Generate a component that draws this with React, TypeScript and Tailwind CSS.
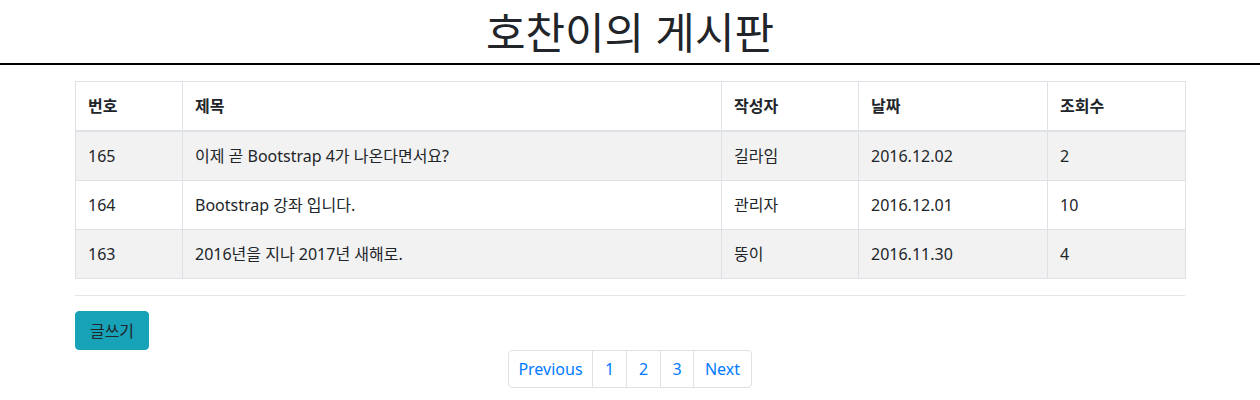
import React from "react";

const rows = [
  { no: 165, title: "이제 곧 Bootstrap 4가 나온다면서요?", author: "길라임", date: "2016.12.02", views: 2 },
  { no: 164, title: "Bootstrap 강좌 입니다.", author: "관리자", date: "2016.12.01", views: 10 },
  { no: 163, title: "2016년을 지나 2017년 새해로.", author: "뚱이", date: "2016.11.30", views: 4 },
];

const pages = [
  { label: "Previous", w: "w-[85px]" },
  { label: "1", w: "w-[35px]" },
  { label: "2", w: "w-[35px]" },
  { label: "3", w: "w-[34px]" },
  { label: "Next", w: "w-[59px]" },
];

export default function App() {
  return (
    <div
      className="w-[1260px] h-[400px] bg-white text-[#212529] text-[16px] leading-[24px]"
      style={{ fontFamily: '"Noto Sans", "Noto Sans CJK KR", sans-serif' }}
    >
      <h1 className="text-center text-[43px] leading-[60px] pt-[3px] font-normal border-b-2 border-black h-[65px]">
        호찬이의 게시판
      </h1>
      <div className="w-[1140px] mx-auto px-[15px] pt-[16px]">
        <table className="w-full border-collapse border border-[#dee2e6] table-fixed">
          <colgroup>
            <col className="w-[107px]" />
            <col className="w-[539px]" />
            <col className="w-[137px]" />
            <col className="w-[189px]" />
            <col className="w-[138px]" />
          </colgroup>
          <thead>
            <tr>
              {["번호", "제목", "작성자", "날짜", "조회수"].map((h) => (
                <th
                  key={h}
                  className="text-left font-bold px-[12px] py-[12px] border border-[#dee2e6] border-b-2 leading-[24px]"
                >
                  {h}
                </th>
              ))}
            </tr>
          </thead>
          <tbody>
            {rows.map((r, i) => (
              <tr key={r.no} className={i % 2 === 0 ? "bg-[#f2f2f2]" : "bg-white"}>
                <td className="px-[12px] py-[12px] border border-[#dee2e6]">{r.no}</td>
                <td className="px-[12px] py-[12px] border border-[#dee2e6]">{r.title}</td>
                <td className="px-[12px] py-[12px] border border-[#dee2e6]">{r.author}</td>
                <td className="px-[12px] py-[12px] border border-[#dee2e6]">{r.date}</td>
                <td className="px-[12px] py-[12px] border border-[#dee2e6]">{r.views}</td>
              </tr>
            ))}
          </tbody>
        </table>
        <hr className="mt-[16px] mb-[15px] border-0 border-t border-[#e5e5e5]" />
        <button className="w-[74px] h-[39px] text-center bg-[#17a2b8] border border-[#17a2b8] rounded-[4px] text-[#212529] leading-[24px]">
          글쓰기
        </button>
        <div className="flex justify-center">
          <ul className="flex">
            {pages.map((p, i) => (
              <li key={p.label}>
                <a
                  href="#"
                  className={
                    "block text-center py-[8px] leading-[20px] text-[#007bff] border border-[#dee2e6] " +
                    p.w +
                    (i === 0 ? " rounded-l-[4px]" : " -ml-px") +
                    (i === pages.length - 1 ? " rounded-r-[4px]" : "")
                  }
                >
                  {p.label}
                </a>
              </li>
            ))}
          </ul>
        </div>
      </div>
    </div>
  );
}
